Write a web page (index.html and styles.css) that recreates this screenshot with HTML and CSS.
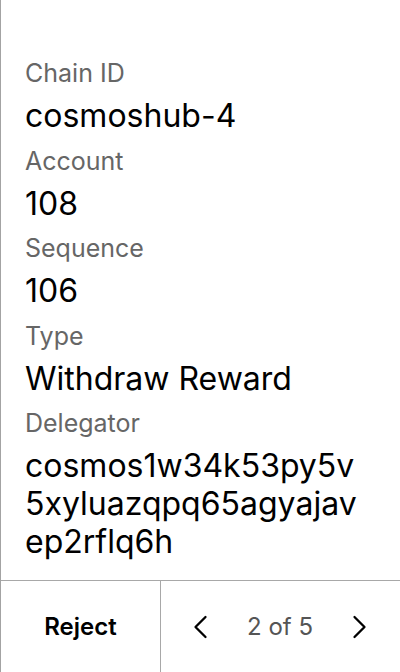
FILE: index.html
```html
<!DOCTYPE html>
<html>
<head>
<meta charset="utf-8">
<link rel="stylesheet" href="styles.css">
</head>
<body>
<div class="screen">
  <main class="fields">
    <div class="field">
      <div class="label">Chain ID</div>
      <div class="value">cosmoshub-4</div>
    </div>
    <div class="field">
      <div class="label">Account</div>
      <div class="value">108</div>
    </div>
    <div class="field">
      <div class="label">Sequence</div>
      <div class="value">106</div>
    </div>
    <div class="field">
      <div class="label">Type</div>
      <div class="value">Withdraw Reward</div>
    </div>
    <div class="field">
      <div class="label">Delegator</div>
      <div class="value address">cosmos1w34k53py5v<br>5xyluazqpq65agyajav<br>ep2rflq6h</div>
    </div>
  </main>
  <footer class="footer">
    <div class="reject">Reject</div>
    <div class="pager">
      <svg class="chev" width="24" height="24" viewBox="0 0 24 24"><path d="M17.5 2 L7.5 12 L17.5 22" fill="none" stroke="#000" stroke-width="2.3" stroke-linecap="round" stroke-linejoin="round"/></svg>
      <span class="count">2 of 5</span>
      <svg class="chev" width="24" height="24" viewBox="0 0 24 24"><path d="M6.5 2 L16.5 12 L6.5 22" fill="none" stroke="#000" stroke-width="2.3" stroke-linecap="round" stroke-linejoin="round"/></svg>
    </div>
  </footer>
</div>
</body>
</html>
```
FILE: styles.css
```css
html, body {
  margin: 0;
  padding: 0;
  background: #fff;
}
body {
  font-family: Inter, "Noto Sans", sans-serif;
  color: #000;
}
.screen {
  width: 399px;
  height: 672px;
  border-left: 1px solid #a3a3a3;
  display: flex;
  flex-direction: column;
}
.fields {
  flex: 1;
  padding: 58px 24px 0 24px;
  display: flex;
  flex-direction: column;
  gap: 10.5px;
}
.label {
  font-size: 25px;
  line-height: 30px;
  color: #666;
  margin-bottom: 9px;
}
.value {
  font-size: 32px;
  line-height: 38px;
  color: #000;
}
.footer {
  height: 91px;
  border-top: 1px solid #a8a8a8;
  display: flex;
}
.reject {
  width: 159px;
  border-right: 1px solid #a8a8a8;
  display: flex;
  align-items: center;
  justify-content: center;
  font-size: 24px;
  font-weight: 600;
}
.pager {
  flex: 1;
  display: flex;
  align-items: center;
  justify-content: space-between;
  padding: 0 28px 0 27px;
}
.count {
  font-size: 24px;
  color: #555;
}
.chev {
  display: block;
}
```
